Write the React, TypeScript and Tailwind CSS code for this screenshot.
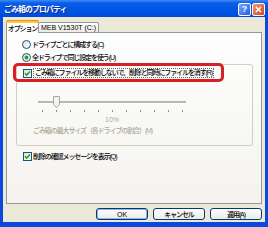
import React from "react";

function Check() {
  return (
    <svg width="9" height="9" viewBox="0 0 9 9" className="shrink-0">
      <defs>
        <linearGradient id="cbg" x1="0" y1="0" x2="1" y2="1">
          <stop offset="0" stopColor="#dcdcd7" />
          <stop offset="1" stopColor="#ffffff" />
        </linearGradient>
      </defs>
      <rect x="0.5" y="0.5" width="8" height="8" fill="url(#cbg)" stroke="#1c5180" />
      <path d="M2 4.3 L3.7 6.1 L7 2.6" stroke="#21a121" strokeWidth="1.5" fill="none" />
    </svg>
  );
}

function Radio({ checked }: { checked?: boolean }) {
  return (
    <svg width="9" height="9" viewBox="0 0 9 9" className="shrink-0">
      <defs>
        <linearGradient id="rbg" x1="0" y1="0" x2="1" y2="1">
          <stop offset="0" stopColor="#dcdcd7" />
          <stop offset="1" stopColor="#ffffff" />
        </linearGradient>
      </defs>
      <circle cx="4.5" cy="4.5" r="4" fill="url(#rbg)" stroke="#1c5180" />
      {checked && <circle cx="4.5" cy="4.5" r="1.9" fill="#21a121" />}
    </svg>
  );
}

const ticks = [0, 1, 2, 3, 4, 5, 6, 7, 8, 9, 10];

export default function App() {
  return (
    <div className="w-[268px] h-[227px] flex flex-col bg-[#0b48dc] overflow-hidden font-[family-name:'Liberation_Sans','Noto_Sans_CJK_JP',sans-serif] text-black">
      {/* title bar */}
      <div className="h-[17px] shrink-0 flex items-center pt-[2px] pl-[4px] pr-[3px] bg-[linear-gradient(to_bottom,#3d8ef5_0%,#0a5be8_18%,#0055e5_60%,#0049d8_100%)]">
        <span className="text-white font-bold text-[7.8px] tracking-[-0.8px] leading-none [text-shadow:1px_1px_0_#0a2a8a]">
          ごみ箱のプロパティ
        </span>
        <div className="ml-auto flex gap-[1px]">
          <div className="w-[13px] h-[13px] rounded-[2px] border border-white bg-[linear-gradient(135deg,#7aa8fa,#1f5ce8)] flex items-center justify-center text-white text-[9px] font-bold leading-none">
            ?
          </div>
          <div className="w-[13px] h-[13px] rounded-[2px] border border-white bg-[linear-gradient(135deg,#f29a78,#d8431b)] flex items-center justify-center">
            <svg width="7" height="7" viewBox="0 0 7 7">
              <path d="M1 1L6 6M6 1L1 6" stroke="white" strokeWidth="1.6" />
            </svg>
          </div>
        </div>
      </div>

      {/* client */}
      <div className="mx-[3px] mb-[5px] flex-1 bg-[#ece9d8] flex flex-col px-[3px] pt-[3px] pb-[2px] text-[7px] font-medium tracking-[-1.1px]">
        {/* tabs */}
        <div className="h-[12px] shrink-0 flex items-end">
          <div className="relative z-10 h-[13px] -mb-px w-[33px] bg-white border border-b-0 border-[#919b9c] rounded-t-[3px] flex items-center justify-center pt-[2px] leading-none">
            <div className="absolute -top-px -left-px -right-px h-[3px] rounded-t-[3px] bg-[#ffc83c] border-t border-[#e68b2c]"></div>
            オプション
          </div>
          <div className="h-[10px] w-[61px] -ml-px border border-b-0 border-[#919b9c] rounded-t-[2px] bg-[linear-gradient(to_bottom,#ffffff,#ecebe6)] flex items-center justify-center leading-none tracking-normal">
            MEB V1530T (C:)
          </div>
        </div>

        {/* panel */}
        <div className="flex-1 border border-[#919b9c] bg-[linear-gradient(to_bottom,#fefefe,#f4f3ee)] flex flex-col pt-[5px]">
          <div className="h-[13px] flex items-center pl-[15px]">
            <Radio />
            <span className="ml-[1px] leading-none">ドライブごとに構成する(C)</span>
          </div>
          <div className="h-[13px] flex items-center pl-[15px]">
            <Radio checked />
            <span className="ml-[1px] leading-none">全ドライブで同じ設定を使う(U)</span>
          </div>

          {/* group box */}
          <div className="ml-[9px] w-[237px] border border-[#d0d0bf] rounded-[3px] pt-[3px] pb-[10px]">
            <div className="pl-[6px] h-[10px] flex items-center">
              <div className="relative flex items-center h-[10px]">
                <div className="absolute -left-[10px] -right-[10px] -top-[5px] -bottom-[4px] border-[3px] border-[#d71f26] rounded-[5px] pointer-events-none"></div>
                <Check />
                <span className="ml-[1px] border border-dotted border-[#666] px-[1px] leading-[8px]">
                  ごみ箱にファイルを移動しないで、削除と同時にファイルを消す(R)
                </span>
              </div>
            </div>

            {/* slider */}
            <div className="relative ml-[21px] w-[148px] mt-[17px] pt-[6px]">
              <div className="h-[3px] bg-[#bab8ae] border-b border-white"></div>
              <div className="mt-[6px] pl-[4px] pr-[3px] flex justify-between">
                {ticks.map((i) => (
                  <span key={i} className="w-px h-[2px] bg-[#8e8e8e]"></span>
                ))}
              </div>
              <svg width="7" height="12" viewBox="0 0 7 12" className="absolute left-[15px] top-[1px]">
                <path d="M0.5 0.5 H6.5 V8.5 L3.5 11.5 L0.5 8.5 Z" fill="#f4f3ee" stroke="#a9a79c" />
              </svg>
            </div>
            <div className="ml-[21px] w-[148px] text-center mt-[3px] h-[9px] leading-[9px] text-[#aca899] tracking-normal">
              10%
            </div>
            <div className="pl-[16px] mt-[2px] h-[9px] leading-[9px] text-[#aca899]">
              ごみ箱の最大サイズ（各ドライブの割合）(M)
            </div>
          </div>

          <div className="mt-[5px] pl-[16px] h-[10px] flex items-center">
            <Check />
            <span className="ml-[1px] leading-none">削除の確認メッセージを表示(Q)</span>
          </div>
        </div>

        {/* buttons */}
        <div className="mt-[4px] h-[12px] shrink-0 flex justify-end gap-[5px]">
          <button className="w-[52px] h-[12px] rounded-[3px] border border-[#003c74] bg-[linear-gradient(to_bottom,#ffffff,#ecebe6)] shadow-[inset_0_0_0_1px_#8fb2e8] leading-none tracking-normal">
            OK
          </button>
          <button className="w-[52px] h-[12px] rounded-[3px] border border-[#003c74] bg-[linear-gradient(to_bottom,#ffffff,#ecebe6)] leading-none">
            キャンセル
          </button>
          <button className="w-[52px] h-[12px] rounded-[3px] border border-[#003c74] bg-[linear-gradient(to_bottom,#ffffff,#ecebe6)] leading-none">
            適用(A)
          </button>
        </div>
      </div>
    </div>
  );
}
